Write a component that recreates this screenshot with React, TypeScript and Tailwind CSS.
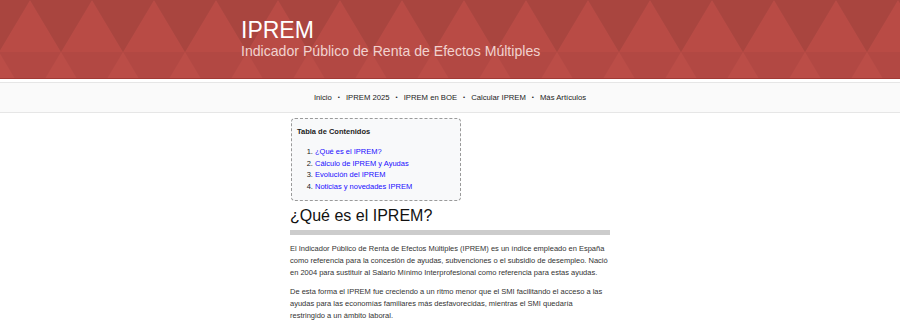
import React from 'react';

const navLinks = ['Inicio', 'IPREM 2025', 'IPREM en BOE', 'Calcular IPREM', 'Más Artículos'];

const tocItems = [
  '¿Qué es el IPREM?',
  'Cálculo de IPREM y Ayudas',
  'Evolución del IPREM',
  'Noticias y novedades IPREM',
];

const HeaderPattern = function () {
  return (
    <svg className="absolute inset-0 h-full w-full" aria-hidden="true">
      <defs>
        <pattern id="diamonds" x="-1" y="0" width="62" height="104" patternUnits="userSpaceOnUse">
          <rect width="62" height="104" fill="#b24843" />
          <polygon points="31,0 62,52 0,52" fill="#b94b45" />
          <polygon points="-31,0 31,0 0,52" fill="#a9453f" />
          <polygon points="31,0 93,0 62,52" fill="#a9453f" />
          <polygon points="0,52 31,104 -31,104" fill="#bb4d47" />
          <polygon points="62,52 93,104 31,104" fill="#bb4d47" />
        </pattern>
      </defs>
      <rect width="100%" height="100%" fill="url(#diamonds)" />
    </svg>
  );
};

export default function App() {
  return (
    <div className="min-h-[325px] bg-white font-['Liberation_Sans',Arial,sans-serif]">
      <header className="relative h-[79px] overflow-hidden border-b border-[#a23a35]">
        <HeaderPattern />
        <div className="relative mx-auto w-[418px] pt-[18px]">
          <h1 className="text-[23px] leading-[25px] text-white">IPREM</h1>
          <p className="text-[14.1px] leading-[17px] text-[#f1d2cf]">
            Indicador Público de Renta de Efectos Múltiples
          </p>
        </div>
      </header>

      <nav className="mt-[3px] flex h-[31px] items-center justify-center border-y border-[#e6e6e6] bg-[#fafafa] text-[7.7px] text-[#222]">
        {navLinks.map((link, i) => (
          <React.Fragment key={link}>
            {i > 0 && <span className="mx-[6px] text-[6px]">•</span>}
            <a href="#">{link}</a>
          </React.Fragment>
        ))}
      </nav>

      <main className="mx-auto w-[320px] pt-[5px]">
        <div className="ml-px w-[170px] rounded-[4px] border border-dashed border-[#9a9a9a] bg-[#f8f9fa] px-[5px] pb-[7px] pt-[7px]">
          <p className="text-[7.5px] font-bold leading-[12px] text-[#222]">Tabla de Contenidos</p>
          <ol className="mt-[8px] list-decimal pl-[18px] text-[7.5px] leading-[11.7px] text-[#222]">
            {tocItems.map((item) => (
              <li key={item}>
                <a href="#" className="text-[#1a0dff]">
                  {item}
                </a>
              </li>
            ))}
          </ol>
        </div>

        <h2 className="mt-[5px] text-[16px] leading-[20px] text-[#111]">¿Qué es el IPREM?</h2>
        <div className="mt-[4px] h-[5px] w-full bg-[#cccccc]" />

        <p className="mt-[8px] text-[7.5px] leading-[12px] text-[#333]">
          El Indicador Público de Renta de Efectos Múltiples (IPREM) es un índice empleado en España
          como referencia para la concesión de ayudas, subvenciones o el subsidio de desempleo. Nació
          en 2004 para sustituir al Salario Mínimo Interprofesional como referencia para estas ayudas.
        </p>
        <p className="mt-[7px] pr-[2px] text-[7.5px] leading-[12px] text-[#333]">
          De esta forma el IPREM fue creciendo a un ritmo menor que el SMI facilitando el acceso a las
          ayudas para las economías familiares más desfavorecidas, mientras el SMI quedaría
          restringido a un ámbito laboral.
        </p>
      </main>
    </div>
  );
}
